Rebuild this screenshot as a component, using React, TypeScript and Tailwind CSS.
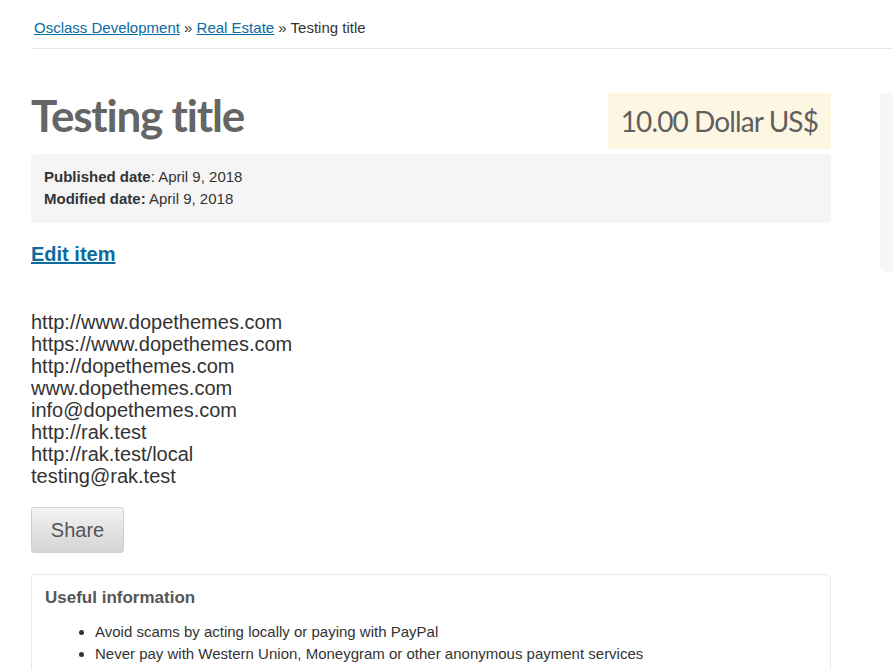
const urls = [
  "http://www.dopethemes.com",
  "https://www.dopethemes.com",
  "http://dopethemes.com",
  "www.dopethemes.com",
  "info@dopethemes.com",
  "http://rak.test",
  "http://rak.test/local",
  "testing@rak.test",
];

const tips = [
  "Avoid scams by acting locally or paying with PayPal",
  "Never pay with Western Union, Moneygram or other anonymous payment services",
];

export default function App() {
  return (
    <div className="min-h-[670px] overflow-hidden bg-white pl-[31px] font-['Liberation_Sans',Arial,sans-serif] text-[#333]">
      <div className="border-b border-[#e8e8e8] pb-[11px] pl-[3px] pt-[19px] text-[15px] leading-[18px]">
        <a href="#" className="text-[#0a6aa1] underline">
          Osclass Development
        </a>{" "}
        » {" "}
        <a href="#" className="text-[#0a6aa1] underline">
          Real Estate
        </a>{" "}
        » Testing title
      </div>

      <div className="mt-[44px] flex gap-[49px]">
        <div className="w-[800px] shrink-0">
          <div className="flex items-start justify-between">
            <h1 className="mt-[-6px] font-['Lato',sans-serif] text-[44px] font-bold leading-[56px] tracking-[-1.2px] text-[#656565]">
              Testing title
            </h1>
            <div className="h-[56px] bg-[#fcf6e3] px-[13px] font-['Lato',sans-serif] text-[28px] leading-[56px] tracking-[-0.9px] text-[#5f5f5f]">
              10.00 Dollar US$
            </div>
          </div>

          <div className="mt-[5px] rounded-[4px] bg-[#f5f5f5] px-[13px] pb-[13px] pt-[12px] text-[15px] leading-[22px]">
            <div>
              <b>Published date</b>: April 9, 2018
            </div>
            <div>
              <b>Modified date:</b> April 9, 2018
            </div>
          </div>

          <a href="#" className="mt-[19px] inline-block text-[20px] font-bold leading-[24px] text-[#0b6b9e] underline">
            Edit item
          </a>

          <div className="mt-[43px] text-[20px] leading-[22px]">
            {urls.map((u) => (
              <div key={u}>{u}</div>
            ))}
          </div>

          <button className="mt-[20px] h-[46px] w-[93px] rounded-[3px] border border-[#d0d0d0] bg-gradient-to-b from-[#f3f3f3] to-[#d4d4d4] text-[20px] text-[#555]">
            Share
          </button>

          <div className="mt-[21px] rounded-[4px] border border-[#e8e8e8] px-[13px] pb-[12px] pt-[12px]">
            <h2 className="text-[17px] font-bold leading-[22px] text-[#555]">Useful information</h2>
            <ul className="mt-[12px] list-disc pl-[50px] text-[15px] leading-[22px]">
              {tips.map((t) => (
                <li key={t}>{t}</li>
              ))}
            </ul>
          </div>
        </div>

        <div className="h-[179px] flex-1 rounded-l-[5px] bg-[#f6f6f6]" />
      </div>
    </div>
  );
}
